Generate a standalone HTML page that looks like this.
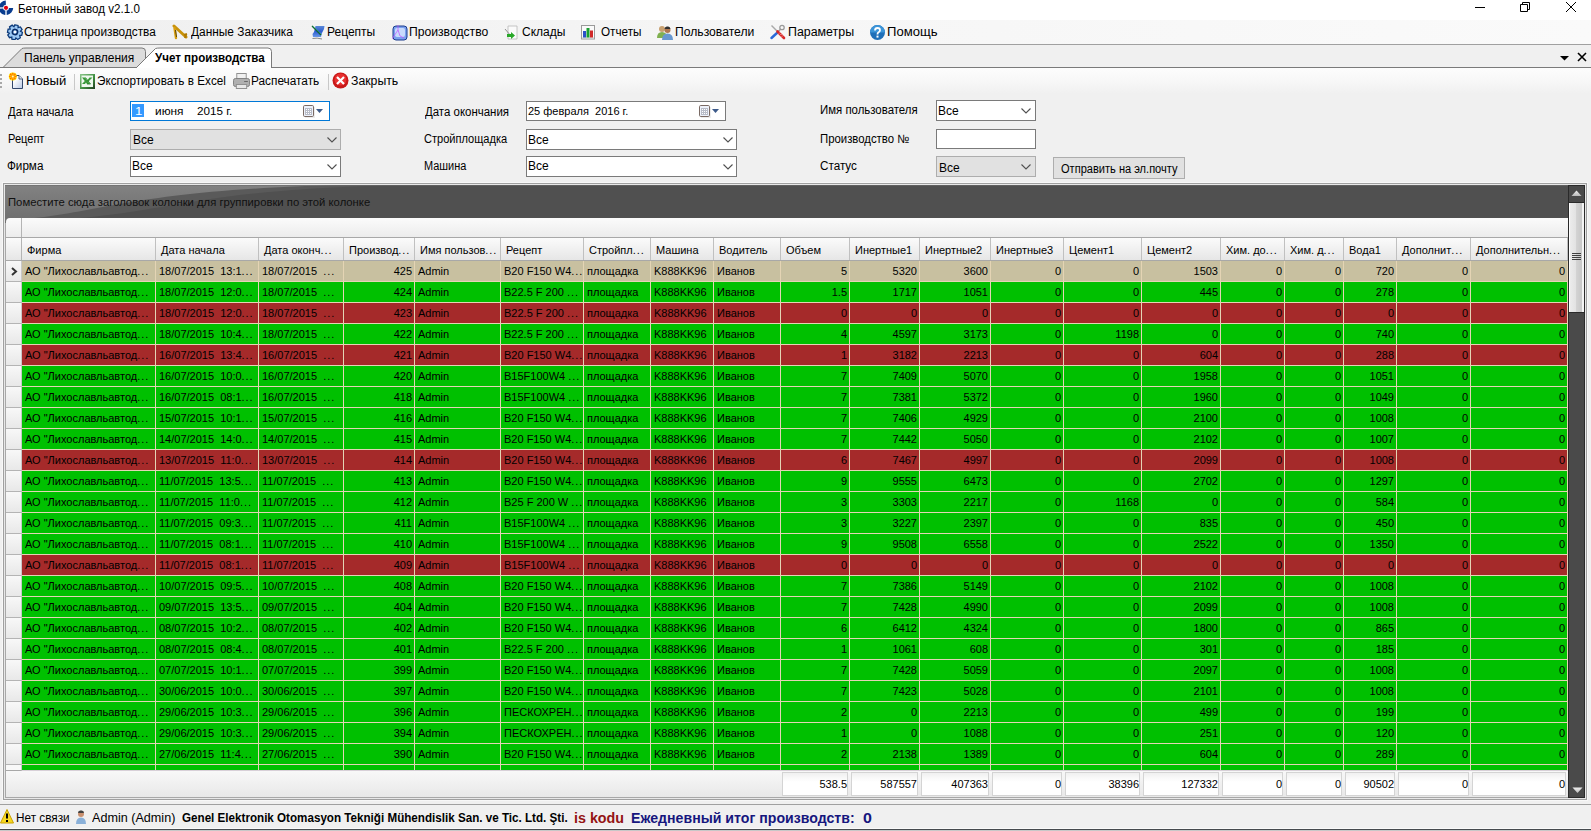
<!DOCTYPE html>
<html><head><meta charset="utf-8">
<style>
*{margin:0;padding:0;box-sizing:border-box}
html,body{width:1591px;height:831px;overflow:hidden;background:#f0f0f0;font-family:"Liberation Sans",sans-serif;font-size:11px;color:#000}
.a{position:absolute}
.t{position:absolute;white-space:pre;line-height:14px}
#title{left:0;top:0;width:1591px;height:20px;background:#fff}
#menu{left:0;top:20px;width:1591px;height:25px;background:linear-gradient(90deg,#efefef,#f6f6f6 50%,#fafafa);border-bottom:1px solid #a0a0a0}
#tabs{left:0;top:45px;width:1591px;height:23px;background:#f0f0f0;border-bottom:1px solid #7a7a7a}
#tool{left:0;top:68px;width:1591px;height:26px;background:linear-gradient(#fdfdfd,#f7f7f7 50%,#f0f0f0)}
.m{font-size:12px}
.lbl{font-size:11px}
.box{position:absolute;background:#fff;border:1px solid #7a7a7a}
.dis{background:#e1e1e1;border-color:#adadad}
.chev{position:absolute;right:5px;top:6px}
#grid{left:3px;top:183px;width:1584px;height:617px;border:1px solid #a0a0a0;background:#e8e8e8}
#inner{left:5px;top:185px;width:1580px;height:613px;border:1px solid #a8a8a8;background:linear-gradient(#fafafa,#e6e6e6)}
#gp{left:5px;top:185px;width:1563px;height:33px;background:#505050;overflow:hidden}
#fr{left:6px;top:218px;width:1562px;height:20px;background:linear-gradient(#fbfbfb,#ececec);border-bottom:1px solid #a8a8a8;border-top-left-radius:4px}
#hdr{left:6px;top:238px;width:1562px;height:23px;background:linear-gradient(#fbfbfb,#e6e6e6);border-bottom:1px solid #a8a8a8}
.hc{position:absolute;top:0;height:22px;line-height:22px;padding-left:5px;padding-top:1px;white-space:pre;overflow:hidden}
.hs{position:absolute;top:0;width:1px;height:22px;background:#c0c0c0}
.row{position:absolute;left:22px;width:1546px;height:21px;border-bottom:1px solid #e4d4b4}
.rs{background:#c8c0a0}
.rg{background:#00c000}
.rr{background:#a52a2a}
.c{position:absolute;top:0;height:20px;line-height:20px;padding:0 3px;white-space:pre;overflow:hidden;border-right:1px solid #e4d4b4}
.rt{text-align:right;padding-right:2px}
.el{letter-spacing:0.95px}
.ind{position:absolute;left:6px;width:16px;height:21px;background:linear-gradient(#f8f8f8,#e8e8e8);border-right:1px solid #c8c8c8;border-bottom:1px solid #b4b4b4}
.vs{position:absolute;top:0;width:1px;height:5px;background:#e4d4b4}
#foot{left:6px;top:771px;width:1562px;height:26px;background:linear-gradient(#f8f8f8,#e8e8e8)}
.tb{position:absolute;top:1px;height:24px;line-height:23px;background:linear-gradient(#f0f0f0,#fff 40%,#fff);border:1px solid #d4d4d4;text-align:right;padding-right:0px}
#sb{left:1568px;top:185px;width:17px;height:613px;background:#4a4a4a;border:1px solid #2a2a2a}
#status{left:0;top:804px;width:1591px;height:27px;background:#f0f0f0;border-top:1px solid #a0a0a0;border-bottom:1px solid #c8c8c8;box-shadow:inset 0 -1px 0 #464a4e, inset 0 -2px 0 #fafafa}
</style></head><body>
<!-- title bar -->
<div id="title" class="a">
 <svg class="a" style="left:0;top:0" width="16" height="16" viewBox="0 0 16 16"><path d="M5.75 0.60 A7.2 7.2 0 0 0 -1.13 6.80 L3.03 7.38 A3.0 3.0 0 0 1 5.90 4.80 Z" fill="#0a3d8f"/><path d="M-1.13 8.80 A7.2 7.2 0 0 0 5.00 14.93 L5.58 10.77 A3.0 3.0 0 0 1 3.03 8.22 Z" fill="#0a3d8f"/><path d="M7.00 14.93 A7.2 7.2 0 0 0 13.20 8.05 L9.00 7.90 A3.0 3.0 0 0 1 6.42 10.77 Z" fill="#0a3d8f"/><rect x="0" y="7" width="3" height="1.6" fill="#a8bcd8"/><rect x="5.2" y="10.8" width="1.6" height="4.2" fill="#a8bcd8"/><circle cx="6" cy="7.8" r="2.1" fill="#e00010"/></svg>
 <svg class="a" style="left:1475px;top:7px" width="11" height="2"><rect width="10" height="1" fill="#000"/></svg>
 <svg class="a" style="left:1519px;top:1px" width="12" height="12"><path d="M1.5 3.5h7v7h-7z M3.5 3.5v-2h7v7h-2" fill="none" stroke="#000" stroke-width="1"/></svg>
 <svg class="a" style="left:1565px;top:1px" width="12" height="12"><path d="M1 1L11 11M11 1L1 11" stroke="#000" stroke-width="1"/></svg>
</div>
<!-- menu -->
<div id="menu" class="a"></div>
<!-- tabs -->
<div id="tabs" class="a"></div>
<svg class="a" style="left:0;top:44px" width="300" height="25">
 <path d="M3 23.5 L22 4.5 Q23 4 26 4 L142 4 Q145.5 4 145.5 7.5 L145.5 18 L141 23.5 Z" fill="#dcdcdc" stroke="#7a7a7a" stroke-width="1"/>
 <path d="M136 24 L155.5 4.5 Q157 4 160 4 L268 4 Q271.5 4 271.5 7.5 L271.5 24 Z" fill="#fff" stroke="#7a7a7a" stroke-width="1"/>
 <rect x="137" y="23" width="134" height="2" fill="#fff"/>
</svg>
<svg class="a" style="left:1560px;top:56px" width="10" height="5"><path d="M0 0h9l-4.5 4.5z" fill="#000"/></svg>
<svg class="a" style="left:1577px;top:52px" width="10" height="10"><path d="M1 1L9 9M9 1L1 9" stroke="#000" stroke-width="1.6"/></svg>
<!-- toolbar -->
<div id="tool" class="a"></div>
<div class="a" style="left:74px;top:74px;width:1px;height:16px;background:#c8c8c8"></div>
<div class="a" style="left:328px;top:74px;width:1px;height:16px;background:#c8c8c8"></div>
<!-- filters -->

<div class="box" style="left:130px;top:101px;width:200px;height:20px;border-color:#0078d7"></div>
<div class="a" style="left:132px;top:104px;width:12px;height:13px;background:#3399ff"></div>
<div class="box" style="left:526px;top:101px;width:200px;height:20px"></div>

<div class="box dis" style="left:130px;top:129px;width:211px;height:21px"></div>
<div class="box" style="left:130px;top:156px;width:211px;height:21px"></div>
<div class="box" style="left:526px;top:129px;width:211px;height:21px"></div>
<div class="box" style="left:526px;top:156px;width:211px;height:21px"></div>
<div class="box" style="left:936px;top:100px;width:100px;height:21px"></div>
<div class="box" style="left:936px;top:129px;width:100px;height:20px"></div>
<div class="box dis" style="left:936px;top:156px;width:100px;height:21px"></div>
<div class="box dis" style="left:1053px;top:157px;width:132px;height:22px"></div>


<!-- menu icons -->
<svg class="a" style="left:6px;top:24px" width="18" height="16" viewBox="0 0 18 16">
 <g transform="translate(9,8) rotate(12)">
 <path d="M-1.6-7h3.2l.5 2 2.1-1.1 2.2 2.2-1.1 2.1 2 .5v3.2l-2 .5 1.1 2.1-2.2 2.2-2.1-1.1-.5 2h-3.2l-.5-2-2.1 1.1-2.2-2.2 1.1-2.1-2-.5v-3.2l2-.5-1.1-2.1 2.2-2.2 2.1 1.1z" fill="#9cc8f4" stroke="#0c3a7a" stroke-width="1.3"/>
 <circle r="2.6" fill="none" stroke="#0a2c66" stroke-width="1.6"/><circle r="1.3" fill="#fff"/>
 </g>
</svg>
<svg class="a" style="left:172px;top:24px" width="16" height="16" viewBox="0 0 16 16">
 <path d="M2 2 L14 13" stroke="#c8920a" stroke-width="3" stroke-linecap="round"/>
 <path d="M2.5 4 L4 14" stroke="#d9a010" stroke-width="2.4" stroke-linecap="round"/>
 <path d="M3.5 6 L4.5 13" stroke="#3a2a00" stroke-width="0.8"/>
 <path d="M12 11 L15 10 M13 14 L14 11" stroke="#b07a00" stroke-width="2"/>
</svg>
<svg class="a" style="left:311px;top:25px" width="14" height="15" viewBox="0 0 14 15">
 <defs><linearGradient id="rb" x1="0" y1="0" x2="0" y2="1"><stop offset="0" stop-color="#5a88d8"/><stop offset="0.5" stop-color="#2e5ed0"/><stop offset="1" stop-color="#6a98e8"/></linearGradient></defs>
 <path d="M4.5 1 L13.5 1 L13 4 L11 8 L10 12 L2 12 L1.5 9 L3 7 Z" fill="url(#rb)"/>
 <path d="M1.5 13.5 Q6 12.5 11 14" fill="none" stroke="#888" stroke-width="1"/>
 <path d="M1 1 L10 10" stroke="#0a5a2a" stroke-width="1.3"/><path d="M1.5 0.8 L10.3 9.6" stroke="#3ad07a" stroke-width="0.5"/>
</svg>
<svg class="a" style="left:392px;top:24px" width="16" height="17" viewBox="0 0 16 17">
 <rect x="1" y="2" width="14" height="14" rx="3" fill="#7aa0ee" stroke="#1c3c8c" stroke-width="1"/>
 <rect x="3" y="4" width="10" height="9" rx="2" fill="#c8dafc"/>
 <path d="M0 15 L6 6 L8 12 L12 14 M6 1 L6 6" fill="none" stroke="#c050ff" stroke-width="0.7"/>
</svg>
<svg class="a" style="left:504px;top:25px" width="14" height="15" viewBox="0 0 14 15">
 <path d="M4 1h9v13h-9z" fill="#fafafa" stroke="#b8b8b8" stroke-width="0.8"/>
 <path d="M1 4 L7 11" stroke="#777" stroke-width="0.8"/>
 <path d="M3 9h4v-2l4 3.5-4 3.5v-2h-4z" fill="#28a828"/>
</svg>
<svg class="a" style="left:581px;top:25px" width="14" height="15" viewBox="0 0 14 15">
 <rect x="0.5" y="0.5" width="13" height="13.5" fill="#fafafa" stroke="#9a9a9a" stroke-width="1"/><rect x="1" y="12.5" width="12" height="1" fill="#c8c8c8"/>
 <rect x="2" y="6" width="3" height="6.5" fill="#2a50c8"/>
 <rect x="5.5" y="3" width="3" height="9.5" fill="#18a030"/>
 <rect x="9" y="5.5" width="3" height="7" fill="#d02828"/>
</svg>
<svg class="a" style="left:657px;top:25px" width="17" height="15" viewBox="0 0 17 15">
 <circle cx="5" cy="4" r="3" fill="#c8a070"/>
 <path d="M0 13 Q0 7 5 7 Q10 7 10 13z" fill="#80b050"/>
 <circle cx="10.5" cy="5" r="3" fill="#b07850"/><path d="M7.5 4 Q8 1 10.5 1.5 Q13 1 13.5 4" fill="#303030"/>
 <path d="M5 15 Q5 8.5 10.5 8.5 Q16 8.5 16 15z" fill="#6898d0"/>
</svg>
<svg class="a" style="left:770px;top:24px" width="16" height="16" viewBox="0 0 16 16">
 <path d="M1.5 1.5 L8 8" stroke="#a8a8a8" stroke-width="1.4"/>
 <path d="M7.5 8.5 L1.5 14" stroke="#2a6ad8" stroke-width="2.4" stroke-linecap="round"/>
 <circle cx="12" cy="3.5" r="2.2" fill="none" stroke="#9a9a9a" stroke-width="1.3"/>
 <path d="M10.8 5 L7 8.5" stroke="#9a9a9a" stroke-width="1.2"/>
 <path d="M7.5 7.5 L14 14" stroke="#d82828" stroke-width="2.6" stroke-linecap="round"/>
 <path d="M9 9.5 L10 8.5 M10.5 11 L11.5 10 M12 12.5 L13 11.5" stroke="#fff" stroke-width="0.7"/>
</svg>
<svg class="a" style="left:869px;top:24px" width="17" height="17" viewBox="0 0 17 17">
 <circle cx="8.5" cy="8.5" r="7.5" fill="#1f6fb8"/>
 <path d="M8.5 1 A7.5 7.5 0 0 1 16 8.5 L1 8.5 A7.5 7.5 0 0 1 8.5 1z" fill="#3b94d8"/>
 <path d="M6 6.5 Q6 4 8.5 4 Q11 4 11 6.3 Q11 7.8 9.3 8.5 Q8.5 9 8.5 10.5" fill="none" stroke="#fff" stroke-width="1.8"/>
 <rect x="7.5" y="11.6" width="2" height="2" fill="#fff"/>
</svg>
<!-- toolbar icons -->
<svg class="a" style="left:0;top:73px" width="3" height="16"><rect x="0" y="1" width="2" height="2" fill="#a8a8a8"/><rect x="0" y="5" width="2" height="2" fill="#a8a8a8"/><rect x="0" y="9" width="2" height="2" fill="#a8a8a8"/><rect x="0" y="13" width="2" height="2" fill="#a8a8a8"/></svg>
<svg class="a" style="left:8px;top:72px" width="16" height="18" viewBox="0 0 16 18">
 <defs><linearGradient id="pg" x1="0" y1="0" x2="1" y2="1"><stop offset="0.3" stop-color="#ffffff"/><stop offset="1" stop-color="#b8c8e4"/></linearGradient></defs>
 <path d="M4.5 3.5h6.5l3.5 3.5v9.5h-10z" fill="url(#pg)" stroke="#34486c" stroke-width="1" stroke-linejoin="round"/>
 <path d="M11 3.5v3.5h3.5" fill="#dde4f0" stroke="#34486c" stroke-width="0.8"/>
 <circle cx="4.8" cy="4.5" r="4" fill="#ffe000"/><circle cx="4.8" cy="4.5" r="2.4" fill="#ffa000"/><circle cx="4.8" cy="4.5" r="1" fill="#fff8c0"/>
 <circle cx="7.80" cy="4.50" r="0.8" fill="#ff6a00"/><circle cx="6.92" cy="6.62" r="0.8" fill="#ff6a00"/><circle cx="4.80" cy="7.50" r="0.8" fill="#ff6a00"/><circle cx="2.68" cy="6.62" r="0.8" fill="#ff6a00"/><circle cx="1.80" cy="4.50" r="0.8" fill="#ff6a00"/><circle cx="2.68" cy="2.38" r="0.8" fill="#ff6a00"/><circle cx="4.80" cy="1.50" r="0.8" fill="#ff6a00"/><circle cx="6.92" cy="2.38" r="0.8" fill="#ff6a00"/>
</svg>
<svg class="a" style="left:80px;top:74px" width="15" height="15" viewBox="0 0 15 15">
 <defs><linearGradient id="xf" x1="0" y1="0" x2="1" y2="1"><stop offset="0" stop-color="#8cc88c"/><stop offset="0.6" stop-color="#3c8a3c"/><stop offset="1" stop-color="#203c20"/></linearGradient></defs>
 <rect x="0" y="0" width="15" height="15" fill="url(#xf)"/>
 <rect x="1.5" y="1.5" width="11.5" height="11.5" fill="#eef8ee"/>
 <path d="M2 3.5h3l5 6.5h-3zM9.5 3.5h3l-4 4h-2zM2 10l3-3.2h2L5 10z" fill="#3a9a3a"/>
 <path d="M7 10h3.5l-5-6.5" fill="none" stroke="#1c7a1c" stroke-width="0.8"/>
</svg>
<svg class="a" style="left:233px;top:73px" width="17" height="16" viewBox="0 0 18 16" preserveAspectRatio="none">
 <rect x="4" y="0.5" width="10" height="6" fill="#f0f0f0" stroke="#909090"/>
 <rect x="0.5" y="5.5" width="17" height="8" rx="2" fill="#b0b0b0" stroke="#808080"/>
 <rect x="3.5" y="11.5" width="11" height="4" fill="#e8e8e8" stroke="#909090"/>
 <rect x="12" y="8" width="1.5" height="1" fill="#555"/><rect x="14" y="8" width="1.5" height="1" fill="#555"/>
</svg>
<svg class="a" style="left:332px;top:72px" width="17" height="17" viewBox="0 0 17 17">
 <circle cx="8.5" cy="8.5" r="8" fill="#c81818"/>
 <circle cx="8.5" cy="7.5" r="6" fill="#e83030"/>
 <path d="M5 5 L12 12 M12 5 L5 12" stroke="#fff" stroke-width="2.2"/>
</svg>
<!-- calendar icons -->
<svg class="a" style="left:303px;top:104px" width="22" height="14" viewBox="0 0 22 14">
 <rect x="2" y="3" width="10" height="11" fill="#000" opacity="0.07"/>
 <rect x="0.5" y="1.5" width="10" height="11" rx="1.2" fill="#eef2fb" stroke="#7a6a64"/>
 <rect x="2" y="4" width="7" height="7" fill="#b8bcc8"/>
 <path d="M3 5h1v1h-1zM5 5h1v1h-1zM7 5h1v1h-1zM3 7h1v1h-1zM5 7h1v1h-1zM7 7h1v1h-1zM3 9h1v1h-1zM5 9h1v1h-1zM7 9h1v1h-1z" fill="#fff"/>
 <path d="M13 5h7l-3.5 4z" fill="#3c5a8a"/>
</svg>
<svg class="a" style="left:699px;top:104px" width="22" height="14" viewBox="0 0 22 14">
 <rect x="2" y="3" width="10" height="11" fill="#000" opacity="0.07"/>
 <rect x="0.5" y="1.5" width="10" height="11" rx="1.2" fill="#eef2fb" stroke="#7a6a64"/>
 <rect x="2" y="4" width="7" height="7" fill="#b8bcc8"/>
 <path d="M3 5h1v1h-1zM5 5h1v1h-1zM7 5h1v1h-1zM3 7h1v1h-1zM5 7h1v1h-1zM7 7h1v1h-1zM3 9h1v1h-1zM5 9h1v1h-1zM7 9h1v1h-1z" fill="#fff"/>
 <path d="M13 5h7l-3.5 4z" fill="#3c5a8a"/>
</svg>
<!-- combo chevrons -->
<svg class="a" style="left:327px;top:137px" width="10" height="6"><path d="M0.5 0.5 L5 5 L9.5 0.5" fill="none" stroke="#505050" stroke-width="1.1"/></svg>
<svg class="a" style="left:327px;top:164px" width="10" height="6"><path d="M0.5 0.5 L5 5 L9.5 0.5" fill="none" stroke="#505050" stroke-width="1.1"/></svg>
<svg class="a" style="left:723px;top:137px" width="10" height="6"><path d="M0.5 0.5 L5 5 L9.5 0.5" fill="none" stroke="#505050" stroke-width="1.1"/></svg>
<svg class="a" style="left:723px;top:164px" width="10" height="6"><path d="M0.5 0.5 L5 5 L9.5 0.5" fill="none" stroke="#505050" stroke-width="1.1"/></svg>
<svg class="a" style="left:1021px;top:108px" width="10" height="6"><path d="M0.5 0.5 L5 5 L9.5 0.5" fill="none" stroke="#505050" stroke-width="1.1"/></svg>
<svg class="a" style="left:1021px;top:164px" width="10" height="6"><path d="M0.5 0.5 L5 5 L9.5 0.5" fill="none" stroke="#505050" stroke-width="1.1"/></svg>

<!-- grid -->
<div class="a" style="left:2px;top:182px;width:1586px;height:619px;border:1px solid #f8f8f8"></div>
<div id="grid" class="a"></div>
<div id="inner" class="a"></div>
<div id="gp" class="a">
 <svg class="a" style="left:0;top:0" width="1563" height="33"><defs><linearGradient id="gl" x1="0" y1="0" x2="0" y2="1"><stop offset="0" stop-color="#828282"/><stop offset="1" stop-color="#707070"/></linearGradient></defs><path d="M0 0 L400 0 C200 4 165 26 75 33 L0 33 Z" fill="#5a5a5a"/><path d="M0 0 L335 0 C135 5 95 27 29 33 L0 33 Z" fill="url(#gl)"/><rect x="0" y="0" width="1563" height="1" fill="#6a6a6a" opacity="0.6"/></svg>
</div>
<div class="a" style="left:5px;top:218px;width:5px;height:5px;background:#727272"></div>
<div id="fr" class="a"><div class="a" style="left:15px;top:0;width:1px;height:19px;background:#b4b4b4"></div></div>
<div id="hdr" class="a">
 <div class="a" style="left:15px;top:0;width:1px;height:22px;background:#b4b4b4"></div>
</div>
<div class="a" style="left:0;top:238px"><div class="hc" style="left:22px;width:133px">Фирма</div><div class="hs" style="left:155px"></div><div class="hc" style="left:156px;width:102px">Дата начала</div><div class="hs" style="left:258px"></div><div class="hc" style="left:259px;width:84px">Дата оконч<span class="el">...</span></div><div class="hs" style="left:343px"></div><div class="hc" style="left:344px;width:70px">Производ<span class="el">...</span></div><div class="hs" style="left:414px"></div><div class="hc" style="left:415px;width:85px">Имя пользов<span class="el">...</span></div><div class="hs" style="left:500px"></div><div class="hc" style="left:501px;width:82px">Рецепт</div><div class="hs" style="left:583px"></div><div class="hc" style="left:584px;width:66px">Стройпл<span class="el">...</span></div><div class="hs" style="left:650px"></div><div class="hc" style="left:651px;width:62px">Машина</div><div class="hs" style="left:713px"></div><div class="hc" style="left:714px;width:66px">Водитель</div><div class="hs" style="left:780px"></div><div class="hc" style="left:781px;width:68px">Объем</div><div class="hs" style="left:849px"></div><div class="hc" style="left:850px;width:69px">Инертные1</div><div class="hs" style="left:919px"></div><div class="hc" style="left:920px;width:70px">Инертные2</div><div class="hs" style="left:990px"></div><div class="hc" style="left:991px;width:72px">Инертные3</div><div class="hs" style="left:1063px"></div><div class="hc" style="left:1064px;width:77px">Цемент1</div><div class="hs" style="left:1141px"></div><div class="hc" style="left:1142px;width:78px">Цемент2</div><div class="hs" style="left:1220px"></div><div class="hc" style="left:1221px;width:63px">Хим. до<span class="el">...</span></div><div class="hs" style="left:1284px"></div><div class="hc" style="left:1285px;width:58px">Хим. д<span class="el">...</span></div><div class="hs" style="left:1343px"></div><div class="hc" style="left:1344px;width:52px">Вода1</div><div class="hs" style="left:1396px"></div><div class="hc" style="left:1397px;width:73px">Дополнит<span class="el">...</span></div><div class="hs" style="left:1470px"></div><div class="hc" style="left:1471px;width:96px">Дополнительн<span class="el">...</span></div><div class="hs" style="left:1567px"></div></div>
<div class="row rs" style="top:261px"><div class="c" style="left:0px;width:134px">АО &quot;Лихославльавтод<span class="el">...</span></div><div class="c" style="left:134px;width:103px">18/07/2015  13:1<span class="el">...</span></div><div class="c" style="left:237px;width:85px">18/07/2015  <span class="el">...</span></div><div class="c rt" style="left:322px;width:71px">425</div><div class="c" style="left:393px;width:86px">Admin</div><div class="c" style="left:479px;width:83px">B20 F150 W4<span class="el">...</span></div><div class="c" style="left:562px;width:67px">площадка</div><div class="c" style="left:629px;width:63px">K888KK96</div><div class="c" style="left:692px;width:67px">Иванов</div><div class="c rt" style="left:759px;width:69px">5</div><div class="c rt" style="left:828px;width:70px">5320</div><div class="c rt" style="left:898px;width:71px">3600</div><div class="c rt" style="left:969px;width:73px">0</div><div class="c rt" style="left:1042px;width:78px">0</div><div class="c rt" style="left:1120px;width:79px">1503</div><div class="c rt" style="left:1199px;width:64px">0</div><div class="c rt" style="left:1263px;width:59px">0</div><div class="c rt" style="left:1322px;width:53px">720</div><div class="c rt" style="left:1375px;width:74px">0</div><div class="c rt" style="left:1449px;width:97px">0</div></div>
<div class="ind" style="top:261px"><svg width="16" height="20"><path d="M6 7 L10 10.5 L6 14" fill="none" stroke="#333" stroke-width="2"/></svg></div>
<div class="row rg" style="top:282px"><div class="c" style="left:0px;width:134px">АО &quot;Лихославльавтод<span class="el">...</span></div><div class="c" style="left:134px;width:103px">18/07/2015  12:0<span class="el">...</span></div><div class="c" style="left:237px;width:85px">18/07/2015  <span class="el">...</span></div><div class="c rt" style="left:322px;width:71px">424</div><div class="c" style="left:393px;width:86px">Admin</div><div class="c" style="left:479px;width:83px">B22.5 F 200 <span class="el">...</span></div><div class="c" style="left:562px;width:67px">площадка</div><div class="c" style="left:629px;width:63px">K888KK96</div><div class="c" style="left:692px;width:67px">Иванов</div><div class="c rt" style="left:759px;width:69px">1.5</div><div class="c rt" style="left:828px;width:70px">1717</div><div class="c rt" style="left:898px;width:71px">1051</div><div class="c rt" style="left:969px;width:73px">0</div><div class="c rt" style="left:1042px;width:78px">0</div><div class="c rt" style="left:1120px;width:79px">445</div><div class="c rt" style="left:1199px;width:64px">0</div><div class="c rt" style="left:1263px;width:59px">0</div><div class="c rt" style="left:1322px;width:53px">278</div><div class="c rt" style="left:1375px;width:74px">0</div><div class="c rt" style="left:1449px;width:97px">0</div></div>
<div class="ind" style="top:282px"></div>
<div class="row rr" style="top:303px"><div class="c" style="left:0px;width:134px">АО &quot;Лихославльавтод<span class="el">...</span></div><div class="c" style="left:134px;width:103px">18/07/2015  12:0<span class="el">...</span></div><div class="c" style="left:237px;width:85px">18/07/2015  <span class="el">...</span></div><div class="c rt" style="left:322px;width:71px">423</div><div class="c" style="left:393px;width:86px">Admin</div><div class="c" style="left:479px;width:83px">B22.5 F 200 <span class="el">...</span></div><div class="c" style="left:562px;width:67px">площадка</div><div class="c" style="left:629px;width:63px">K888KK96</div><div class="c" style="left:692px;width:67px">Иванов</div><div class="c rt" style="left:759px;width:69px">0</div><div class="c rt" style="left:828px;width:70px">0</div><div class="c rt" style="left:898px;width:71px">0</div><div class="c rt" style="left:969px;width:73px">0</div><div class="c rt" style="left:1042px;width:78px">0</div><div class="c rt" style="left:1120px;width:79px">0</div><div class="c rt" style="left:1199px;width:64px">0</div><div class="c rt" style="left:1263px;width:59px">0</div><div class="c rt" style="left:1322px;width:53px">0</div><div class="c rt" style="left:1375px;width:74px">0</div><div class="c rt" style="left:1449px;width:97px">0</div></div>
<div class="ind" style="top:303px"></div>
<div class="row rg" style="top:324px"><div class="c" style="left:0px;width:134px">АО &quot;Лихославльавтод<span class="el">...</span></div><div class="c" style="left:134px;width:103px">18/07/2015  10:4<span class="el">...</span></div><div class="c" style="left:237px;width:85px">18/07/2015  <span class="el">...</span></div><div class="c rt" style="left:322px;width:71px">422</div><div class="c" style="left:393px;width:86px">Admin</div><div class="c" style="left:479px;width:83px">B22.5 F 200 <span class="el">...</span></div><div class="c" style="left:562px;width:67px">площадка</div><div class="c" style="left:629px;width:63px">K888KK96</div><div class="c" style="left:692px;width:67px">Иванов</div><div class="c rt" style="left:759px;width:69px">4</div><div class="c rt" style="left:828px;width:70px">4597</div><div class="c rt" style="left:898px;width:71px">3173</div><div class="c rt" style="left:969px;width:73px">0</div><div class="c rt" style="left:1042px;width:78px">1198</div><div class="c rt" style="left:1120px;width:79px">0</div><div class="c rt" style="left:1199px;width:64px">0</div><div class="c rt" style="left:1263px;width:59px">0</div><div class="c rt" style="left:1322px;width:53px">740</div><div class="c rt" style="left:1375px;width:74px">0</div><div class="c rt" style="left:1449px;width:97px">0</div></div>
<div class="ind" style="top:324px"></div>
<div class="row rr" style="top:345px"><div class="c" style="left:0px;width:134px">АО &quot;Лихославльавтод<span class="el">...</span></div><div class="c" style="left:134px;width:103px">16/07/2015  13:4<span class="el">...</span></div><div class="c" style="left:237px;width:85px">16/07/2015  <span class="el">...</span></div><div class="c rt" style="left:322px;width:71px">421</div><div class="c" style="left:393px;width:86px">Admin</div><div class="c" style="left:479px;width:83px">B20 F150 W4<span class="el">...</span></div><div class="c" style="left:562px;width:67px">площадка</div><div class="c" style="left:629px;width:63px">K888KK96</div><div class="c" style="left:692px;width:67px">Иванов</div><div class="c rt" style="left:759px;width:69px">1</div><div class="c rt" style="left:828px;width:70px">3182</div><div class="c rt" style="left:898px;width:71px">2213</div><div class="c rt" style="left:969px;width:73px">0</div><div class="c rt" style="left:1042px;width:78px">0</div><div class="c rt" style="left:1120px;width:79px">604</div><div class="c rt" style="left:1199px;width:64px">0</div><div class="c rt" style="left:1263px;width:59px">0</div><div class="c rt" style="left:1322px;width:53px">288</div><div class="c rt" style="left:1375px;width:74px">0</div><div class="c rt" style="left:1449px;width:97px">0</div></div>
<div class="ind" style="top:345px"></div>
<div class="row rg" style="top:366px"><div class="c" style="left:0px;width:134px">АО &quot;Лихославльавтод<span class="el">...</span></div><div class="c" style="left:134px;width:103px">16/07/2015  10:0<span class="el">...</span></div><div class="c" style="left:237px;width:85px">16/07/2015  <span class="el">...</span></div><div class="c rt" style="left:322px;width:71px">420</div><div class="c" style="left:393px;width:86px">Admin</div><div class="c" style="left:479px;width:83px">B15F100W4 <span class="el">...</span></div><div class="c" style="left:562px;width:67px">площадка</div><div class="c" style="left:629px;width:63px">K888KK96</div><div class="c" style="left:692px;width:67px">Иванов</div><div class="c rt" style="left:759px;width:69px">7</div><div class="c rt" style="left:828px;width:70px">7409</div><div class="c rt" style="left:898px;width:71px">5070</div><div class="c rt" style="left:969px;width:73px">0</div><div class="c rt" style="left:1042px;width:78px">0</div><div class="c rt" style="left:1120px;width:79px">1958</div><div class="c rt" style="left:1199px;width:64px">0</div><div class="c rt" style="left:1263px;width:59px">0</div><div class="c rt" style="left:1322px;width:53px">1051</div><div class="c rt" style="left:1375px;width:74px">0</div><div class="c rt" style="left:1449px;width:97px">0</div></div>
<div class="ind" style="top:366px"></div>
<div class="row rg" style="top:387px"><div class="c" style="left:0px;width:134px">АО &quot;Лихославльавтод<span class="el">...</span></div><div class="c" style="left:134px;width:103px">16/07/2015  08:1<span class="el">...</span></div><div class="c" style="left:237px;width:85px">16/07/2015  <span class="el">...</span></div><div class="c rt" style="left:322px;width:71px">418</div><div class="c" style="left:393px;width:86px">Admin</div><div class="c" style="left:479px;width:83px">B15F100W4 <span class="el">...</span></div><div class="c" style="left:562px;width:67px">площадка</div><div class="c" style="left:629px;width:63px">K888KK96</div><div class="c" style="left:692px;width:67px">Иванов</div><div class="c rt" style="left:759px;width:69px">7</div><div class="c rt" style="left:828px;width:70px">7381</div><div class="c rt" style="left:898px;width:71px">5372</div><div class="c rt" style="left:969px;width:73px">0</div><div class="c rt" style="left:1042px;width:78px">0</div><div class="c rt" style="left:1120px;width:79px">1960</div><div class="c rt" style="left:1199px;width:64px">0</div><div class="c rt" style="left:1263px;width:59px">0</div><div class="c rt" style="left:1322px;width:53px">1049</div><div class="c rt" style="left:1375px;width:74px">0</div><div class="c rt" style="left:1449px;width:97px">0</div></div>
<div class="ind" style="top:387px"></div>
<div class="row rg" style="top:408px"><div class="c" style="left:0px;width:134px">АО &quot;Лихославльавтод<span class="el">...</span></div><div class="c" style="left:134px;width:103px">15/07/2015  10:1<span class="el">...</span></div><div class="c" style="left:237px;width:85px">15/07/2015  <span class="el">...</span></div><div class="c rt" style="left:322px;width:71px">416</div><div class="c" style="left:393px;width:86px">Admin</div><div class="c" style="left:479px;width:83px">B20 F150 W4<span class="el">...</span></div><div class="c" style="left:562px;width:67px">площадка</div><div class="c" style="left:629px;width:63px">K888KK96</div><div class="c" style="left:692px;width:67px">Иванов</div><div class="c rt" style="left:759px;width:69px">7</div><div class="c rt" style="left:828px;width:70px">7406</div><div class="c rt" style="left:898px;width:71px">4929</div><div class="c rt" style="left:969px;width:73px">0</div><div class="c rt" style="left:1042px;width:78px">0</div><div class="c rt" style="left:1120px;width:79px">2100</div><div class="c rt" style="left:1199px;width:64px">0</div><div class="c rt" style="left:1263px;width:59px">0</div><div class="c rt" style="left:1322px;width:53px">1008</div><div class="c rt" style="left:1375px;width:74px">0</div><div class="c rt" style="left:1449px;width:97px">0</div></div>
<div class="ind" style="top:408px"></div>
<div class="row rg" style="top:429px"><div class="c" style="left:0px;width:134px">АО &quot;Лихославльавтод<span class="el">...</span></div><div class="c" style="left:134px;width:103px">14/07/2015  14:0<span class="el">...</span></div><div class="c" style="left:237px;width:85px">14/07/2015  <span class="el">...</span></div><div class="c rt" style="left:322px;width:71px">415</div><div class="c" style="left:393px;width:86px">Admin</div><div class="c" style="left:479px;width:83px">B20 F150 W4<span class="el">...</span></div><div class="c" style="left:562px;width:67px">площадка</div><div class="c" style="left:629px;width:63px">K888KK96</div><div class="c" style="left:692px;width:67px">Иванов</div><div class="c rt" style="left:759px;width:69px">7</div><div class="c rt" style="left:828px;width:70px">7442</div><div class="c rt" style="left:898px;width:71px">5050</div><div class="c rt" style="left:969px;width:73px">0</div><div class="c rt" style="left:1042px;width:78px">0</div><div class="c rt" style="left:1120px;width:79px">2102</div><div class="c rt" style="left:1199px;width:64px">0</div><div class="c rt" style="left:1263px;width:59px">0</div><div class="c rt" style="left:1322px;width:53px">1007</div><div class="c rt" style="left:1375px;width:74px">0</div><div class="c rt" style="left:1449px;width:97px">0</div></div>
<div class="ind" style="top:429px"></div>
<div class="row rr" style="top:450px"><div class="c" style="left:0px;width:134px">АО &quot;Лихославльавтод<span class="el">...</span></div><div class="c" style="left:134px;width:103px">13/07/2015  11:0<span class="el">...</span></div><div class="c" style="left:237px;width:85px">13/07/2015  <span class="el">...</span></div><div class="c rt" style="left:322px;width:71px">414</div><div class="c" style="left:393px;width:86px">Admin</div><div class="c" style="left:479px;width:83px">B20 F150 W4<span class="el">...</span></div><div class="c" style="left:562px;width:67px">площадка</div><div class="c" style="left:629px;width:63px">K888KK96</div><div class="c" style="left:692px;width:67px">Иванов</div><div class="c rt" style="left:759px;width:69px">6</div><div class="c rt" style="left:828px;width:70px">7467</div><div class="c rt" style="left:898px;width:71px">4997</div><div class="c rt" style="left:969px;width:73px">0</div><div class="c rt" style="left:1042px;width:78px">0</div><div class="c rt" style="left:1120px;width:79px">2099</div><div class="c rt" style="left:1199px;width:64px">0</div><div class="c rt" style="left:1263px;width:59px">0</div><div class="c rt" style="left:1322px;width:53px">1008</div><div class="c rt" style="left:1375px;width:74px">0</div><div class="c rt" style="left:1449px;width:97px">0</div></div>
<div class="ind" style="top:450px"></div>
<div class="row rg" style="top:471px"><div class="c" style="left:0px;width:134px">АО &quot;Лихославльавтод<span class="el">...</span></div><div class="c" style="left:134px;width:103px">11/07/2015  13:5<span class="el">...</span></div><div class="c" style="left:237px;width:85px">11/07/2015  <span class="el">...</span></div><div class="c rt" style="left:322px;width:71px">413</div><div class="c" style="left:393px;width:86px">Admin</div><div class="c" style="left:479px;width:83px">B20 F150 W4<span class="el">...</span></div><div class="c" style="left:562px;width:67px">площадка</div><div class="c" style="left:629px;width:63px">K888KK96</div><div class="c" style="left:692px;width:67px">Иванов</div><div class="c rt" style="left:759px;width:69px">9</div><div class="c rt" style="left:828px;width:70px">9555</div><div class="c rt" style="left:898px;width:71px">6473</div><div class="c rt" style="left:969px;width:73px">0</div><div class="c rt" style="left:1042px;width:78px">0</div><div class="c rt" style="left:1120px;width:79px">2702</div><div class="c rt" style="left:1199px;width:64px">0</div><div class="c rt" style="left:1263px;width:59px">0</div><div class="c rt" style="left:1322px;width:53px">1297</div><div class="c rt" style="left:1375px;width:74px">0</div><div class="c rt" style="left:1449px;width:97px">0</div></div>
<div class="ind" style="top:471px"></div>
<div class="row rg" style="top:492px"><div class="c" style="left:0px;width:134px">АО &quot;Лихославльавтод<span class="el">...</span></div><div class="c" style="left:134px;width:103px">11/07/2015  11:0<span class="el">...</span></div><div class="c" style="left:237px;width:85px">11/07/2015  <span class="el">...</span></div><div class="c rt" style="left:322px;width:71px">412</div><div class="c" style="left:393px;width:86px">Admin</div><div class="c" style="left:479px;width:83px">B25 F 200 W <span class="el">...</span></div><div class="c" style="left:562px;width:67px">площадка</div><div class="c" style="left:629px;width:63px">K888KK96</div><div class="c" style="left:692px;width:67px">Иванов</div><div class="c rt" style="left:759px;width:69px">3</div><div class="c rt" style="left:828px;width:70px">3303</div><div class="c rt" style="left:898px;width:71px">2217</div><div class="c rt" style="left:969px;width:73px">0</div><div class="c rt" style="left:1042px;width:78px">1168</div><div class="c rt" style="left:1120px;width:79px">0</div><div class="c rt" style="left:1199px;width:64px">0</div><div class="c rt" style="left:1263px;width:59px">0</div><div class="c rt" style="left:1322px;width:53px">584</div><div class="c rt" style="left:1375px;width:74px">0</div><div class="c rt" style="left:1449px;width:97px">0</div></div>
<div class="ind" style="top:492px"></div>
<div class="row rg" style="top:513px"><div class="c" style="left:0px;width:134px">АО &quot;Лихославльавтод<span class="el">...</span></div><div class="c" style="left:134px;width:103px">11/07/2015  09:3<span class="el">...</span></div><div class="c" style="left:237px;width:85px">11/07/2015  <span class="el">...</span></div><div class="c rt" style="left:322px;width:71px">411</div><div class="c" style="left:393px;width:86px">Admin</div><div class="c" style="left:479px;width:83px">B15F100W4 <span class="el">...</span></div><div class="c" style="left:562px;width:67px">площадка</div><div class="c" style="left:629px;width:63px">K888KK96</div><div class="c" style="left:692px;width:67px">Иванов</div><div class="c rt" style="left:759px;width:69px">3</div><div class="c rt" style="left:828px;width:70px">3227</div><div class="c rt" style="left:898px;width:71px">2397</div><div class="c rt" style="left:969px;width:73px">0</div><div class="c rt" style="left:1042px;width:78px">0</div><div class="c rt" style="left:1120px;width:79px">835</div><div class="c rt" style="left:1199px;width:64px">0</div><div class="c rt" style="left:1263px;width:59px">0</div><div class="c rt" style="left:1322px;width:53px">450</div><div class="c rt" style="left:1375px;width:74px">0</div><div class="c rt" style="left:1449px;width:97px">0</div></div>
<div class="ind" style="top:513px"></div>
<div class="row rg" style="top:534px"><div class="c" style="left:0px;width:134px">АО &quot;Лихославльавтод<span class="el">...</span></div><div class="c" style="left:134px;width:103px">11/07/2015  08:1<span class="el">...</span></div><div class="c" style="left:237px;width:85px">11/07/2015  <span class="el">...</span></div><div class="c rt" style="left:322px;width:71px">410</div><div class="c" style="left:393px;width:86px">Admin</div><div class="c" style="left:479px;width:83px">B15F100W4 <span class="el">...</span></div><div class="c" style="left:562px;width:67px">площадка</div><div class="c" style="left:629px;width:63px">K888KK96</div><div class="c" style="left:692px;width:67px">Иванов</div><div class="c rt" style="left:759px;width:69px">9</div><div class="c rt" style="left:828px;width:70px">9508</div><div class="c rt" style="left:898px;width:71px">6558</div><div class="c rt" style="left:969px;width:73px">0</div><div class="c rt" style="left:1042px;width:78px">0</div><div class="c rt" style="left:1120px;width:79px">2522</div><div class="c rt" style="left:1199px;width:64px">0</div><div class="c rt" style="left:1263px;width:59px">0</div><div class="c rt" style="left:1322px;width:53px">1350</div><div class="c rt" style="left:1375px;width:74px">0</div><div class="c rt" style="left:1449px;width:97px">0</div></div>
<div class="ind" style="top:534px"></div>
<div class="row rr" style="top:555px"><div class="c" style="left:0px;width:134px">АО &quot;Лихославльавтод<span class="el">...</span></div><div class="c" style="left:134px;width:103px">11/07/2015  08:1<span class="el">...</span></div><div class="c" style="left:237px;width:85px">11/07/2015  <span class="el">...</span></div><div class="c rt" style="left:322px;width:71px">409</div><div class="c" style="left:393px;width:86px">Admin</div><div class="c" style="left:479px;width:83px">B15F100W4 <span class="el">...</span></div><div class="c" style="left:562px;width:67px">площадка</div><div class="c" style="left:629px;width:63px">K888KK96</div><div class="c" style="left:692px;width:67px">Иванов</div><div class="c rt" style="left:759px;width:69px">0</div><div class="c rt" style="left:828px;width:70px">0</div><div class="c rt" style="left:898px;width:71px">0</div><div class="c rt" style="left:969px;width:73px">0</div><div class="c rt" style="left:1042px;width:78px">0</div><div class="c rt" style="left:1120px;width:79px">0</div><div class="c rt" style="left:1199px;width:64px">0</div><div class="c rt" style="left:1263px;width:59px">0</div><div class="c rt" style="left:1322px;width:53px">0</div><div class="c rt" style="left:1375px;width:74px">0</div><div class="c rt" style="left:1449px;width:97px">0</div></div>
<div class="ind" style="top:555px"></div>
<div class="row rg" style="top:576px"><div class="c" style="left:0px;width:134px">АО &quot;Лихославльавтод<span class="el">...</span></div><div class="c" style="left:134px;width:103px">10/07/2015  09:5<span class="el">...</span></div><div class="c" style="left:237px;width:85px">10/07/2015  <span class="el">...</span></div><div class="c rt" style="left:322px;width:71px">408</div><div class="c" style="left:393px;width:86px">Admin</div><div class="c" style="left:479px;width:83px">B20 F150 W4<span class="el">...</span></div><div class="c" style="left:562px;width:67px">площадка</div><div class="c" style="left:629px;width:63px">K888KK96</div><div class="c" style="left:692px;width:67px">Иванов</div><div class="c rt" style="left:759px;width:69px">7</div><div class="c rt" style="left:828px;width:70px">7386</div><div class="c rt" style="left:898px;width:71px">5149</div><div class="c rt" style="left:969px;width:73px">0</div><div class="c rt" style="left:1042px;width:78px">0</div><div class="c rt" style="left:1120px;width:79px">2102</div><div class="c rt" style="left:1199px;width:64px">0</div><div class="c rt" style="left:1263px;width:59px">0</div><div class="c rt" style="left:1322px;width:53px">1008</div><div class="c rt" style="left:1375px;width:74px">0</div><div class="c rt" style="left:1449px;width:97px">0</div></div>
<div class="ind" style="top:576px"></div>
<div class="row rg" style="top:597px"><div class="c" style="left:0px;width:134px">АО &quot;Лихославльавтод<span class="el">...</span></div><div class="c" style="left:134px;width:103px">09/07/2015  13:5<span class="el">...</span></div><div class="c" style="left:237px;width:85px">09/07/2015  <span class="el">...</span></div><div class="c rt" style="left:322px;width:71px">404</div><div class="c" style="left:393px;width:86px">Admin</div><div class="c" style="left:479px;width:83px">B20 F150 W4<span class="el">...</span></div><div class="c" style="left:562px;width:67px">площадка</div><div class="c" style="left:629px;width:63px">K888KK96</div><div class="c" style="left:692px;width:67px">Иванов</div><div class="c rt" style="left:759px;width:69px">7</div><div class="c rt" style="left:828px;width:70px">7428</div><div class="c rt" style="left:898px;width:71px">4990</div><div class="c rt" style="left:969px;width:73px">0</div><div class="c rt" style="left:1042px;width:78px">0</div><div class="c rt" style="left:1120px;width:79px">2099</div><div class="c rt" style="left:1199px;width:64px">0</div><div class="c rt" style="left:1263px;width:59px">0</div><div class="c rt" style="left:1322px;width:53px">1008</div><div class="c rt" style="left:1375px;width:74px">0</div><div class="c rt" style="left:1449px;width:97px">0</div></div>
<div class="ind" style="top:597px"></div>
<div class="row rg" style="top:618px"><div class="c" style="left:0px;width:134px">АО &quot;Лихославльавтод<span class="el">...</span></div><div class="c" style="left:134px;width:103px">08/07/2015  10:2<span class="el">...</span></div><div class="c" style="left:237px;width:85px">08/07/2015  <span class="el">...</span></div><div class="c rt" style="left:322px;width:71px">402</div><div class="c" style="left:393px;width:86px">Admin</div><div class="c" style="left:479px;width:83px">B20 F150 W4<span class="el">...</span></div><div class="c" style="left:562px;width:67px">площадка</div><div class="c" style="left:629px;width:63px">K888KK96</div><div class="c" style="left:692px;width:67px">Иванов</div><div class="c rt" style="left:759px;width:69px">6</div><div class="c rt" style="left:828px;width:70px">6412</div><div class="c rt" style="left:898px;width:71px">4324</div><div class="c rt" style="left:969px;width:73px">0</div><div class="c rt" style="left:1042px;width:78px">0</div><div class="c rt" style="left:1120px;width:79px">1800</div><div class="c rt" style="left:1199px;width:64px">0</div><div class="c rt" style="left:1263px;width:59px">0</div><div class="c rt" style="left:1322px;width:53px">865</div><div class="c rt" style="left:1375px;width:74px">0</div><div class="c rt" style="left:1449px;width:97px">0</div></div>
<div class="ind" style="top:618px"></div>
<div class="row rg" style="top:639px"><div class="c" style="left:0px;width:134px">АО &quot;Лихославльавтод<span class="el">...</span></div><div class="c" style="left:134px;width:103px">08/07/2015  08:4<span class="el">...</span></div><div class="c" style="left:237px;width:85px">08/07/2015  <span class="el">...</span></div><div class="c rt" style="left:322px;width:71px">401</div><div class="c" style="left:393px;width:86px">Admin</div><div class="c" style="left:479px;width:83px">B22.5 F 200 <span class="el">...</span></div><div class="c" style="left:562px;width:67px">площадка</div><div class="c" style="left:629px;width:63px">K888KK96</div><div class="c" style="left:692px;width:67px">Иванов</div><div class="c rt" style="left:759px;width:69px">1</div><div class="c rt" style="left:828px;width:70px">1061</div><div class="c rt" style="left:898px;width:71px">608</div><div class="c rt" style="left:969px;width:73px">0</div><div class="c rt" style="left:1042px;width:78px">0</div><div class="c rt" style="left:1120px;width:79px">301</div><div class="c rt" style="left:1199px;width:64px">0</div><div class="c rt" style="left:1263px;width:59px">0</div><div class="c rt" style="left:1322px;width:53px">185</div><div class="c rt" style="left:1375px;width:74px">0</div><div class="c rt" style="left:1449px;width:97px">0</div></div>
<div class="ind" style="top:639px"></div>
<div class="row rg" style="top:660px"><div class="c" style="left:0px;width:134px">АО &quot;Лихославльавтод<span class="el">...</span></div><div class="c" style="left:134px;width:103px">07/07/2015  10:1<span class="el">...</span></div><div class="c" style="left:237px;width:85px">07/07/2015  <span class="el">...</span></div><div class="c rt" style="left:322px;width:71px">399</div><div class="c" style="left:393px;width:86px">Admin</div><div class="c" style="left:479px;width:83px">B20 F150 W4<span class="el">...</span></div><div class="c" style="left:562px;width:67px">площадка</div><div class="c" style="left:629px;width:63px">K888KK96</div><div class="c" style="left:692px;width:67px">Иванов</div><div class="c rt" style="left:759px;width:69px">7</div><div class="c rt" style="left:828px;width:70px">7428</div><div class="c rt" style="left:898px;width:71px">5059</div><div class="c rt" style="left:969px;width:73px">0</div><div class="c rt" style="left:1042px;width:78px">0</div><div class="c rt" style="left:1120px;width:79px">2097</div><div class="c rt" style="left:1199px;width:64px">0</div><div class="c rt" style="left:1263px;width:59px">0</div><div class="c rt" style="left:1322px;width:53px">1008</div><div class="c rt" style="left:1375px;width:74px">0</div><div class="c rt" style="left:1449px;width:97px">0</div></div>
<div class="ind" style="top:660px"></div>
<div class="row rg" style="top:681px"><div class="c" style="left:0px;width:134px">АО &quot;Лихославльавтод<span class="el">...</span></div><div class="c" style="left:134px;width:103px">30/06/2015  10:0<span class="el">...</span></div><div class="c" style="left:237px;width:85px">30/06/2015  <span class="el">...</span></div><div class="c rt" style="left:322px;width:71px">397</div><div class="c" style="left:393px;width:86px">Admin</div><div class="c" style="left:479px;width:83px">B20 F150 W4<span class="el">...</span></div><div class="c" style="left:562px;width:67px">площадка</div><div class="c" style="left:629px;width:63px">K888KK96</div><div class="c" style="left:692px;width:67px">Иванов</div><div class="c rt" style="left:759px;width:69px">7</div><div class="c rt" style="left:828px;width:70px">7423</div><div class="c rt" style="left:898px;width:71px">5028</div><div class="c rt" style="left:969px;width:73px">0</div><div class="c rt" style="left:1042px;width:78px">0</div><div class="c rt" style="left:1120px;width:79px">2101</div><div class="c rt" style="left:1199px;width:64px">0</div><div class="c rt" style="left:1263px;width:59px">0</div><div class="c rt" style="left:1322px;width:53px">1008</div><div class="c rt" style="left:1375px;width:74px">0</div><div class="c rt" style="left:1449px;width:97px">0</div></div>
<div class="ind" style="top:681px"></div>
<div class="row rg" style="top:702px"><div class="c" style="left:0px;width:134px">АО &quot;Лихославльавтод<span class="el">...</span></div><div class="c" style="left:134px;width:103px">29/06/2015  10:3<span class="el">...</span></div><div class="c" style="left:237px;width:85px">29/06/2015  <span class="el">...</span></div><div class="c rt" style="left:322px;width:71px">396</div><div class="c" style="left:393px;width:86px">Admin</div><div class="c" style="left:479px;width:83px">ПЕСКОХРЕН<span class="el">...</span></div><div class="c" style="left:562px;width:67px">площадка</div><div class="c" style="left:629px;width:63px">K888KK96</div><div class="c" style="left:692px;width:67px">Иванов</div><div class="c rt" style="left:759px;width:69px">2</div><div class="c rt" style="left:828px;width:70px">0</div><div class="c rt" style="left:898px;width:71px">2213</div><div class="c rt" style="left:969px;width:73px">0</div><div class="c rt" style="left:1042px;width:78px">0</div><div class="c rt" style="left:1120px;width:79px">499</div><div class="c rt" style="left:1199px;width:64px">0</div><div class="c rt" style="left:1263px;width:59px">0</div><div class="c rt" style="left:1322px;width:53px">199</div><div class="c rt" style="left:1375px;width:74px">0</div><div class="c rt" style="left:1449px;width:97px">0</div></div>
<div class="ind" style="top:702px"></div>
<div class="row rg" style="top:723px"><div class="c" style="left:0px;width:134px">АО &quot;Лихославльавтод<span class="el">...</span></div><div class="c" style="left:134px;width:103px">29/06/2015  10:3<span class="el">...</span></div><div class="c" style="left:237px;width:85px">29/06/2015  <span class="el">...</span></div><div class="c rt" style="left:322px;width:71px">394</div><div class="c" style="left:393px;width:86px">Admin</div><div class="c" style="left:479px;width:83px">ПЕСКОХРЕН<span class="el">...</span></div><div class="c" style="left:562px;width:67px">площадка</div><div class="c" style="left:629px;width:63px">K888KK96</div><div class="c" style="left:692px;width:67px">Иванов</div><div class="c rt" style="left:759px;width:69px">1</div><div class="c rt" style="left:828px;width:70px">0</div><div class="c rt" style="left:898px;width:71px">1088</div><div class="c rt" style="left:969px;width:73px">0</div><div class="c rt" style="left:1042px;width:78px">0</div><div class="c rt" style="left:1120px;width:79px">251</div><div class="c rt" style="left:1199px;width:64px">0</div><div class="c rt" style="left:1263px;width:59px">0</div><div class="c rt" style="left:1322px;width:53px">120</div><div class="c rt" style="left:1375px;width:74px">0</div><div class="c rt" style="left:1449px;width:97px">0</div></div>
<div class="ind" style="top:723px"></div>
<div class="row rg" style="top:744px"><div class="c" style="left:0px;width:134px">АО &quot;Лихославльавтод<span class="el">...</span></div><div class="c" style="left:134px;width:103px">27/06/2015  11:4<span class="el">...</span></div><div class="c" style="left:237px;width:85px">27/06/2015  <span class="el">...</span></div><div class="c rt" style="left:322px;width:71px">390</div><div class="c" style="left:393px;width:86px">Admin</div><div class="c" style="left:479px;width:83px">B20 F150 W4<span class="el">...</span></div><div class="c" style="left:562px;width:67px">площадка</div><div class="c" style="left:629px;width:63px">K888KK96</div><div class="c" style="left:692px;width:67px">Иванов</div><div class="c rt" style="left:759px;width:69px">2</div><div class="c rt" style="left:828px;width:70px">2138</div><div class="c rt" style="left:898px;width:71px">1389</div><div class="c rt" style="left:969px;width:73px">0</div><div class="c rt" style="left:1042px;width:78px">0</div><div class="c rt" style="left:1120px;width:79px">604</div><div class="c rt" style="left:1199px;width:64px">0</div><div class="c rt" style="left:1263px;width:59px">0</div><div class="c rt" style="left:1322px;width:53px">289</div><div class="c rt" style="left:1375px;width:74px">0</div><div class="c rt" style="left:1449px;width:97px">0</div></div>
<div class="ind" style="top:744px"></div>
<div class="a" style="left:22px;top:765px;width:1546px;height:5px;background:#00c000"><div class="vs" style="left:133px"></div><div class="vs" style="left:236px"></div><div class="vs" style="left:321px"></div><div class="vs" style="left:392px"></div><div class="vs" style="left:478px"></div><div class="vs" style="left:561px"></div><div class="vs" style="left:628px"></div><div class="vs" style="left:691px"></div><div class="vs" style="left:758px"></div><div class="vs" style="left:827px"></div><div class="vs" style="left:897px"></div><div class="vs" style="left:968px"></div><div class="vs" style="left:1041px"></div><div class="vs" style="left:1119px"></div><div class="vs" style="left:1198px"></div><div class="vs" style="left:1262px"></div><div class="vs" style="left:1321px"></div><div class="vs" style="left:1374px"></div><div class="vs" style="left:1448px"></div><div class="vs" style="left:1545px"></div></div>
<div class="a" style="left:6px;top:765px;width:16px;height:6px;background:#f8f8f8;border-right:1px solid #c8c8c8;border-bottom:1px solid #a8a8a8"></div>
<div class="a" style="left:22px;top:770px;width:1546px;height:1px;background:#d8d0d8"></div>
<div id="foot" class="a"><div class="tb" style="left:776px;width:66px">538.5</div><div class="tb" style="left:845px;width:67px">587557</div><div class="tb" style="left:915px;width:68px">407363</div><div class="tb" style="left:986px;width:70px">0</div><div class="tb" style="left:1059px;width:75px">38396</div><div class="tb" style="left:1137px;width:76px">127332</div><div class="tb" style="left:1216px;width:61px">0</div><div class="tb" style="left:1280px;width:56px">0</div><div class="tb" style="left:1339px;width:50px">90502</div><div class="tb" style="left:1392px;width:71px">0</div><div class="tb" style="left:1466px;width:94px">0</div></div>
<div id="sb" class="a">
 <div class="a" style="left:0;top:0;width:15px;height:16px;background:#4a4a4a"></div>
 <svg class="a" style="left:2px;top:4px" width="11" height="7"><defs><linearGradient id="ar" x1="0" y1="0" x2="0" y2="1"><stop offset="0" stop-color="#f0f0f0"/><stop offset="1" stop-color="#b8b8b8"/></linearGradient></defs><path d="M0.5 6 L5.5 0.5 L10.5 6 Z" fill="url(#ar)"/></svg>
 <div class="a" style="left:0;top:16px;width:15px;height:1px;background:#2a2a2a"></div>
 <div class="a" style="left:0;top:17px;width:15px;height:109px;background:linear-gradient(90deg,#fdfdfd 0,#fdfdfd 1px,#ececec 1px,#e2e2e2 7px,#d4d4d4 7px,#c8c8c8 13px,#f4f4f4 13px)"></div>
 <div class="a" style="left:3px;top:67px;width:9px;height:1px;background:#404040"></div>
 <div class="a" style="left:3px;top:69px;width:9px;height:1px;background:#404040"></div>
 <div class="a" style="left:3px;top:71px;width:9px;height:1px;background:#404040"></div>
 <div class="a" style="left:3px;top:73px;width:9px;height:1px;background:#404040"></div>
 <div class="a" style="left:0;top:126px;width:15px;height:1px;background:#2a2a2a"></div>
 <svg class="a" style="left:3px;top:601px" width="11" height="7"><path d="M0.5 0.5 L10.5 0.5 L5.5 6 Z" fill="url(#ar)"/></svg>
</div>

<!-- status -->
<div id="status" class="a"></div>

<svg class="a" style="left:0;top:809px" width="14" height="15" viewBox="0 0 14 15">
 <path d="M7 0.5 L13.5 14 L0.5 14 Z" fill="#f8d820" stroke="#c8a000" stroke-width="1" stroke-linejoin="round"/>
 <rect x="6" y="4.5" width="2" height="5" fill="#000"/><rect x="6" y="11" width="2" height="2" fill="#000"/>
</svg>
<svg class="a" style="left:75px;top:810px" width="12" height="15" viewBox="0 0 12 15">
 <circle cx="6" cy="4" r="3" fill="#c89070"/><path d="M3 3 Q3 0 6 0.5 Q9 0 9 3" fill="#404040"/>
 <path d="M1 14 Q1 7.5 6 7.5 Q11 7.5 11 14z" fill="#8ab0d8"/>
</svg>
<div class="t" style="left:18.03px;top:2px;font-size:12px;font-weight:normal;color:#000;transform:scaleX(0.9680);transform-origin:0 0">Бетонный завод v2.1.0</div>
<div class="t" style="left:24.02px;top:25px;font-size:12px;font-weight:normal;color:#000;transform:scaleX(0.9850);transform-origin:0 0">Страница производства</div>
<div class="t" style="left:191.00px;top:25px;font-size:12px;font-weight:normal;color:#000;transform:scaleX(0.9903);transform-origin:0 0">Данные Заказчика</div>
<div class="t" style="left:327.00px;top:25px;font-size:12px;font-weight:normal;color:#000">Рецепты</div>
<div class="t" style="left:408.99px;top:25px;font-size:12px;font-weight:normal;color:#000;transform:scaleX(1.0130);transform-origin:0 0">Производство</div>
<div class="t" style="left:522.00px;top:25px;font-size:12px;font-weight:normal;color:#000">Склады</div>
<div class="t" style="left:601.00px;top:25px;font-size:12px;font-weight:normal;color:#000;transform:scaleX(0.9756);transform-origin:0 0">Отчеты</div>
<div class="t" style="left:674.99px;top:25px;font-size:12px;font-weight:normal;color:#000;transform:scaleX(1.0130);transform-origin:0 0">Пользователи</div>
<div class="t" style="left:787.97px;top:25px;font-size:12px;font-weight:normal;color:#000;transform:scaleX(1.0323);transform-origin:0 0">Параметры</div>
<div class="t" style="left:886.91px;top:25px;font-size:12px;font-weight:normal;color:#000;transform:scaleX(1.0889);transform-origin:0 0">Помощь</div>
<div class="t" style="left:24.00px;top:51px;font-size:12px;font-weight:normal;color:#000">Панель управления</div>
<div class="t" style="left:155.00px;top:51px;font-size:12px;font-weight:bold;color:#000;transform:scaleX(0.9649);transform-origin:0 0">Учет производства</div>
<div class="t" style="left:25.91px;top:74px;font-size:12px;font-weight:normal;color:#000;transform:scaleX(1.0857);transform-origin:0 0">Новый</div>
<div class="t" style="left:97.02px;top:74px;font-size:12px;font-weight:normal;color:#000;transform:scaleX(0.9769);transform-origin:0 0">Экспортировать в Excel</div>
<div class="t" style="left:251.01px;top:74px;font-size:12px;font-weight:normal;color:#000;transform:scaleX(0.9853);transform-origin:0 0">Распечатать</div>
<div class="t" style="left:350.98px;top:74px;font-size:12px;font-weight:normal;color:#000;transform:scaleX(1.0222);transform-origin:0 0">Закрыть</div>
<div class="t" style="left:8.00px;top:105px;font-size:12px;font-weight:normal;color:#000;transform:scaleX(0.9420);transform-origin:0 0">Дата начала</div>
<div class="t" style="left:8.08px;top:132px;font-size:12px;font-weight:normal;color:#000;transform:scaleX(0.9211);transform-origin:0 0">Рецепт</div>
<div class="t" style="left:7.03px;top:159px;font-size:12px;font-weight:normal;color:#000;transform:scaleX(0.9722);transform-origin:0 0">Фирма</div>
<div class="t" style="left:425.00px;top:105px;font-size:12px;font-weight:normal;color:#000;transform:scaleX(0.9540);transform-origin:0 0">Дата окончания</div>
<div class="t" style="left:424.08px;top:132px;font-size:12px;font-weight:normal;color:#000;transform:scaleX(0.9213);transform-origin:0 0">Стройплощадка</div>
<div class="t" style="left:424.09px;top:159px;font-size:12px;font-weight:normal;color:#000;transform:scaleX(0.9111);transform-origin:0 0">Машина</div>
<div class="t" style="left:820.05px;top:103px;font-size:12px;font-weight:normal;color:#000;transform:scaleX(0.9505);transform-origin:0 0">Имя пользователя</div>
<div class="t" style="left:820.05px;top:132px;font-size:12px;font-weight:normal;color:#000;transform:scaleX(0.9462);transform-origin:0 0">Производство №</div>
<div class="t" style="left:820.03px;top:159px;font-size:12px;font-weight:normal;color:#000;transform:scaleX(0.9730);transform-origin:0 0">Статус</div>
<div class="t" style="left:134.80px;top:104px;font-size:11px;font-weight:normal;color:#fff;transform:scaleX(1.2000);transform-origin:0 0">1</div>
<div class="t" style="left:154.92px;top:104px;font-size:11px;font-weight:normal;color:#000;transform:scaleX(1.0800);transform-origin:0 0">июня</div>
<div class="t" style="left:197.00px;top:104px;font-size:11px;font-weight:normal;color:#000;transform:scaleX(1.0606);transform-origin:0 0">2015 г.</div>
<div class="t" style="left:528.00px;top:104px;font-size:11px;font-weight:normal;color:#000">25 февраля  2016 г.</div>
<div class="t" style="left:133.00px;top:133px;font-size:12px;font-weight:normal;color:#000">Все</div>
<div class="t" style="left:132.00px;top:159px;font-size:12px;font-weight:normal;color:#000">Все</div>
<div class="t" style="left:528.00px;top:133px;font-size:12px;font-weight:normal;color:#000">Все</div>
<div class="t" style="left:528.00px;top:159px;font-size:12px;font-weight:normal;color:#000">Все</div>
<div class="t" style="left:938.00px;top:104px;font-size:12px;font-weight:normal;color:#000">Все</div>
<div class="t" style="left:939.00px;top:161px;font-size:12px;font-weight:normal;color:#000">Все</div>
<div class="t" style="left:1061.00px;top:162px;font-size:12px;font-weight:normal;color:#000;transform:scaleX(0.9213);transform-origin:0 0">Отправить на эл.почту</div>
<div class="t" style="left:7.97px;top:195px;font-size:11px;font-weight:normal;color:#111;transform:scaleX(1.0256);transform-origin:0 0">Поместите сюда заголовок колонки для группировки по этой колонке</div>
<div class="t" style="left:16.02px;top:811px;font-size:12px;font-weight:normal;color:#000;transform:scaleX(0.9811);transform-origin:0 0">Нет связи</div>
<div class="t" style="left:92.00px;top:811px;font-size:12px;font-weight:normal;color:#000;transform:scaleX(1.0506);transform-origin:0 0">Admin (Admin)</div>
<div class="t" style="left:182.00px;top:811px;font-size:12px;font-weight:bold;color:#000;transform:scaleX(0.9698);transform-origin:0 0">Genel Elektronik Otomasyon Tekniği Mühendislik San. ve Tic. Ltd. Şti.</div>
<div class="t" style="left:573.98px;top:811px;font-size:14px;font-weight:bold;color:#941414;transform:scaleX(1.0213);transform-origin:0 0">is kodu</div>
<div class="t" style="left:630.99px;top:811px;font-size:14px;font-weight:bold;color:#16167e;transform:scaleX(1.0091);transform-origin:0 0">Ежедневный итог производств:</div>
<div class="t" style="left:863.00px;top:811px;font-size:14px;font-weight:bold;color:#16167e;transform:scaleX(1.1429);transform-origin:0 0">0</div>
</body></html>
